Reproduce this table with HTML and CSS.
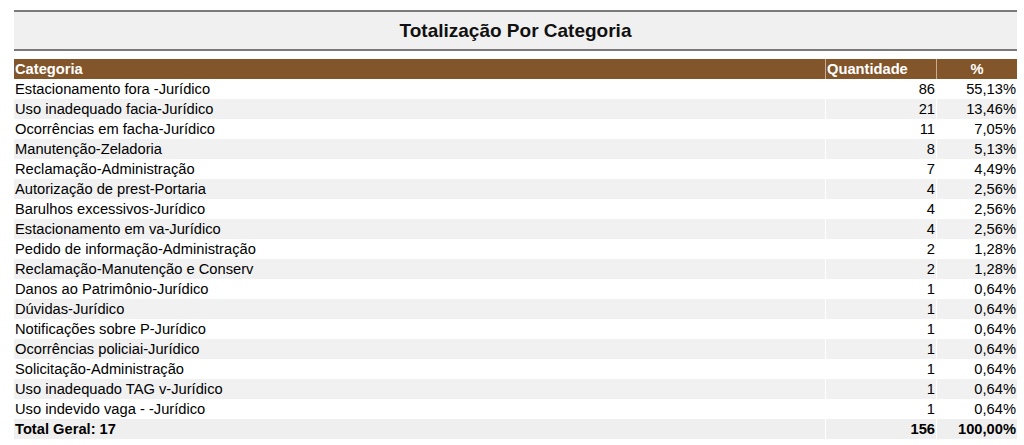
FILE: index.html
```html
<!DOCTYPE html>
<html lang="pt-BR">
<head>
<meta charset="utf-8">
<title>Totalização Por Categoria</title>
<link rel="stylesheet" href="styles.css">
</head>
<body>
<div class="report">
  <div class="title-box"><h1 class="title">Totalização Por Categoria</h1></div>
  <table class="grid">
    <colgroup><col class="c-cat"><col class="c-qty"><col class="c-pct"></colgroup>
    <thead>
      <tr><th class="left">Categoria</th><th class="left">Quantidade</th><th class="center">%</th></tr>
    </thead>
    <tbody>
      <tr><td>Estacionamento fora -Jurídico</td><td class="num">86</td><td class="num">55,13%</td></tr>
      <tr><td>Uso inadequado facia-Jurídico</td><td class="num">21</td><td class="num">13,46%</td></tr>
      <tr><td>Ocorrências em facha-Jurídico</td><td class="num">11</td><td class="num">7,05%</td></tr>
      <tr><td>Manutenção-Zeladoria</td><td class="num">8</td><td class="num">5,13%</td></tr>
      <tr><td>Reclamação-Administração</td><td class="num">7</td><td class="num">4,49%</td></tr>
      <tr><td>Autorização de prest-Portaria</td><td class="num">4</td><td class="num">2,56%</td></tr>
      <tr><td>Barulhos excessivos-Jurídico</td><td class="num">4</td><td class="num">2,56%</td></tr>
      <tr><td>Estacionamento em va-Jurídico</td><td class="num">4</td><td class="num">2,56%</td></tr>
      <tr><td>Pedido de informação-Administração</td><td class="num">2</td><td class="num">1,28%</td></tr>
      <tr><td>Reclamação-Manutenção e Conserv</td><td class="num">2</td><td class="num">1,28%</td></tr>
      <tr><td>Danos ao Patrimônio-Jurídico</td><td class="num">1</td><td class="num">0,64%</td></tr>
      <tr><td>Dúvidas-Jurídico</td><td class="num">1</td><td class="num">0,64%</td></tr>
      <tr><td>Notificações sobre P-Jurídico</td><td class="num">1</td><td class="num">0,64%</td></tr>
      <tr><td>Ocorrências policiai-Jurídico</td><td class="num">1</td><td class="num">0,64%</td></tr>
      <tr><td>Solicitação-Administração</td><td class="num">1</td><td class="num">0,64%</td></tr>
      <tr><td>Uso inadequado TAG v-Jurídico</td><td class="num">1</td><td class="num">0,64%</td></tr>
      <tr><td>Uso indevido vaga - -Jurídico</td><td class="num">1</td><td class="num">0,64%</td></tr>
    </tbody>
    <tfoot>
      <tr><td>Total Geral: 17</td><td class="num">156</td><td class="num">100,00%</td></tr>
    </tfoot>
  </table>
</div>
</body>
</html>
```
FILE: styles.css
```css
html, body {
  margin: 0;
  padding: 0;
  background: #ffffff;
}
body {
  font-family: "Liberation Sans", Arial, sans-serif;
  color: #000;
}
.report {
  padding: 10px 7px 0 14px;
}
.title-box {
  background: #f0f0f0;
  border-top: 2px solid #7a7a7a;
  border-bottom: 2px solid #7a7a7a;
  height: 37px;
  display: flex;
  align-items: center;
  justify-content: center;
}
.title {
  margin: 0;
  font-size: 19px;
  font-weight: bold;
  color: #111;
}
.grid {
  width: 100%;
  margin-top: 8px;
  border-collapse: separate;
  border-spacing: 0;
  table-layout: fixed;
  font-size: 14.7px;
}
.c-cat { width: 812px; }
.c-qty { width: 111px; }
.grid th, .grid td {
  height: 20px;
  padding: 0 1px 0 1px;
  line-height: 20px;
  white-space: nowrap;
  overflow: hidden;
  border-right: 1px solid #ffffff;
  box-sizing: border-box;
}
.grid th:last-child, .grid td:last-child { border-right: none; }
.grid th {
  background: #83552a;
  color: #ffffff;
  font-weight: bold;
  border-right-color: #c9ac8e;
}
.left { text-align: left; }
.center { text-align: center; }
.num { text-align: right; }
.grid tbody tr:nth-child(even) td { background: #f1f1f1; }
.grid tfoot td {
  background: #efefef;
  font-weight: bold;
}
```
